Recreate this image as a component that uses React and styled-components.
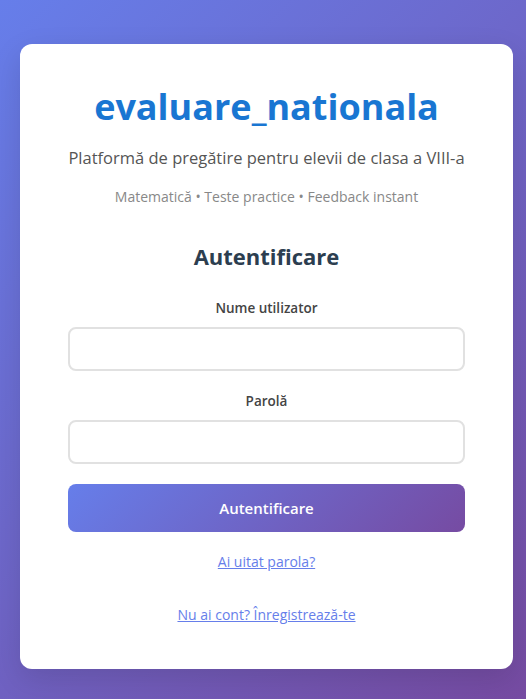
import React from "react";
import styled, {createGlobalStyle} from "styled-components";

const GlobalStyle = createGlobalStyle`
  html, body {
    margin: 0;
    padding: 0;
    height: 100%;
  }
  body {
    font-family: "Open Sans", "Noto Sans", sans-serif;
    background: linear-gradient(135deg, #667eea 0%, #764ba2 100%);
    min-height: 699px;
  }
`

const Page = styled.div`
  box-sizing: border-box;
  min-height: 699px;
  padding: 44px 13px 30px 20px;
`

const Card = styled.div`
  box-sizing: border-box;
  background: #fff;
  border-radius: 12px;
  height: 625px;
  padding: 40px 48px 0;
  box-shadow: 0 10px 30px rgba(0, 0, 0, 0.12);
  display: flex;
  flex-direction: column;
  align-items: center;
`

const Title = styled.h1`
  margin: 0;
  font-size: 36px;
  line-height: 46px;
  font-weight: 700;
  color: #1976d2;
`

const Subtitle = styled.p`
  margin: 16px 0 0;
  font-size: 16.5px;
  line-height: 24px;
  color: #555;
`

const Tagline = styled.p`
  margin: 17px 0 0;
  font-size: 14px;
  line-height: 20px;
  color: #888;
`

const Heading = styled.h2`
  margin: 34px 0 0;
  font-size: 22px;
  line-height: 30px;
  font-weight: 700;
  color: #2c3e50;
`

const Form = styled.form`
  width: 100%;
  margin-top: 27px;
  display: flex;
  flex-direction: column;
`

const Field = styled.div`
  display: flex;
  flex-direction: column;
  align-items: center;
  margin-bottom: 20px;
`

const Label = styled.label`
  font-size: 13.5px;
  line-height: 20px;
  font-weight: 600;
  color: #444;
  margin-bottom: 9px;
`

const Input = styled.input`
  box-sizing: border-box;
  width: 100%;
  height: 44px;
  border: 2px solid #e1e1e1;
  border-radius: 8px;
  padding: 0 12px;
  font-size: 15px;
  outline: none;
`

const Button = styled.button`
  width: 100%;
  height: 48px;
  border: none;
  border-radius: 8px;
  background: linear-gradient(135deg, #667eea 0%, #764ba2 100%);
  color: #fff;
  font-family: inherit;
  font-size: 15px;
  font-weight: 600;
`

const LinkRow = styled.div`
  margin-top: ${props => props.mt};
  text-align: center;
`

const Link = styled.a`
  color: #667eea;
  font-size: 14px;
  line-height: 20px;
  text-decoration: underline;
`

export default function App() {
    return (
        <>
            <GlobalStyle/>
            <Page>
                <Card>
                    <Title>evaluare_nationala</Title>
                    <Subtitle>Platformă de pregătire pentru elevii de clasa a VIII-a</Subtitle>
                    <Tagline>Matematică • Teste practice • Feedback instant</Tagline>
                    <Heading>Autentificare</Heading>
                    <Form onSubmit={e => e.preventDefault()}>
                        <Field>
                            <Label htmlFor="user">Nume utilizator</Label>
                            <Input id="user" type="text"/>
                        </Field>
                        <Field>
                            <Label htmlFor="pass">Parolă</Label>
                            <Input id="pass" type="password"/>
                        </Field>
                        <Button type="submit">Autentificare</Button>
                    </Form>
                    <LinkRow mt="18px"><Link href="#">Ai uitat parola?</Link></LinkRow>
                    <LinkRow mt="31px"><Link href="#">Nu ai cont? Înregistrează-te</Link></LinkRow>
                </Card>
            </Page>
        </>
    )
}
